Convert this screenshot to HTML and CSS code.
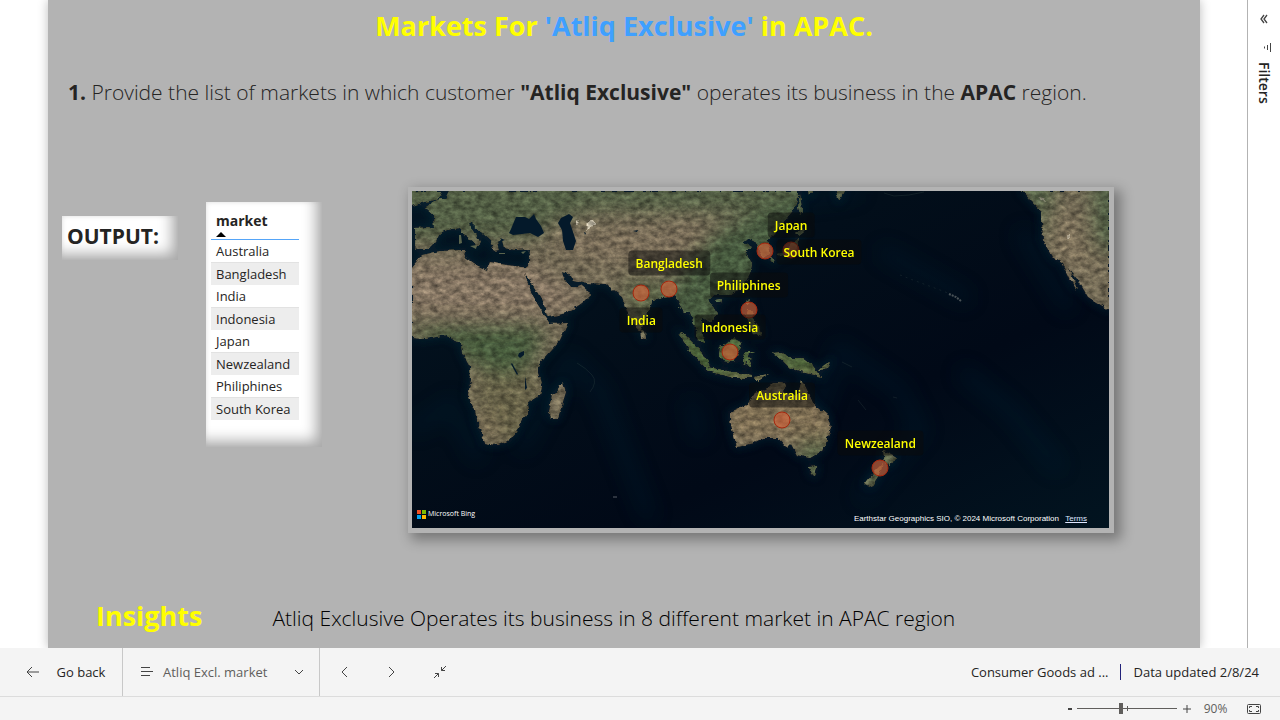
FILE: index.html
```html
<!DOCTYPE html>
<html lang="en">
<head>
<meta charset="utf-8">
<meta name="viewport" content="width=device-width, initial-scale=1">
<title>Atliq Excl. market</title>
<link rel="stylesheet" href="styles.css">
</head>
<body>
<div class="workspace">
  <main class="stage">
    <article class="report">
      <h1 class="title">Markets For <span class="accent">'Atliq Exclusive'</span> in APAC.</h1>
      <p class="question"><b>1.</b> Provide the list of markets in which customer <b>"Atliq Exclusive"</b> operates its business in the <b>APAC</b> region.</p>
      <section class="visuals">
        <h2 class="output card">OUTPUT:</h2>
        <div class="table-card card">
          <table class="markets">
            <thead><tr><th scope="col" aria-sort="ascending">market<svg class="sort" viewBox="0 0 10 5" aria-hidden="true"><path d="M0 5 5 0l5 5z"/></svg></th></tr></thead>
            <tbody>
              <tr><td>Australia</td></tr>
              <tr><td>Bangladesh</td></tr>
              <tr><td>India</td></tr>
              <tr><td>Indonesia</td></tr>
              <tr><td>Japan</td></tr>
              <tr><td>Newzealand</td></tr>
              <tr><td>Philiphines</td></tr>
              <tr><td>South Korea</td></tr>
            </tbody>
          </table>
        </div>
        <figure class="map-frame">
          <div class="map">
            <svg class="imagery" viewBox="412 191 697 337" preserveAspectRatio="none" role="img" aria-label="Satellite map of Asia Pacific">
              <defs>
                <filter id="terrain" x="412" y="191" width="697" height="337" filterUnits="userSpaceOnUse" color-interpolation-filters="sRGB">
                  <feTurbulence type="fractalNoise" baseFrequency=".13 .19" numOctaves="5" seed="8" result="n"/>
                  <feColorMatrix in="n" values="1 .4 0 0 -.22  1 .4 0 0 -.22  1 .4 0 0 -.22  0 0 0 0 1" result="g"/>
                  <feDisplacementMap in="SourceGraphic" in2="n" scale="5" xChannelSelector="R" yChannelSelector="G" result="d"/>
                  <feComposite in="d" in2="g" operator="arithmetic" k1=".85" k2=".52"/>
                </filter>
                <filter id="soft" x="-50%" y="-50%" width="200%" height="200%"><feGaussianBlur stdDeviation="10"/></filter>
                <filter id="shelf" x="-20%" y="-20%" width="140%" height="140%"><feGaussianBlur stdDeviation="4"/></filter>
                <linearGradient id="ocean" x1="0" x2="1" y1="0" y2="1">
                  <stop offset="0" stop-color="#031522"/><stop offset=".35" stop-color="#020e1a"/><stop offset=".65" stop-color="#010917"/><stop offset="1" stop-color="#021420"/>
                </linearGradient>
                <path id="continents" d="M412 191H798L798 197 793 210 783 223 773 235 767 240 770 253 763 258 757 243 748 238 742 243 752 247 745 253 752 263 750 273 743 287 730 295 713 295 708 300 715 310 717 315 710 322 702 317 702 330 704 343 698 340 695 327 690 313 685 313 680 305 675 295 663 297 653 300 648 312 644 322 640 331 633 325 627 310 622 297 613 290 607 284 587 283 573 280 567 272 562 271 563 277 570 287 577 287 582 285 588 290 590 295 582 303 567 313 548 317 542 300 533 285 528 277 525 275 533 297 543 313 550 324 568 323 560 340 542 360 538 366 538 373 542 387 540 395 527 403 528 413 522 418 520 425 510 440 497 445 485 443 478 425 475 410 468 395 471 380 470 367 462 353 461 342 455 341 447 335 425 339 412 338V267L422 255 440 251 462 250 465 250 464 256 478 266 487 270 490 262 500 264 520 267 526 267 529 262 530 249 514 250 504 248 502 240 497 242 499 250 494 251 490 240 480 231 470 222 469 225 477 237 480 243 475 248 474 242 465 235 459 228 446 230 440 233 436 241 428 249 417 249 415 247 415 228 434 227 433 214 425 207 436 200 445 199 449 191H442L438 199 424 202 412 206z
                  M563 383 566 392 558 418 552 418 548 412 552 395z M641 329l4 3 1 6-4 1z M678 332l7 3 10 10 8 8 7 13-5 1-15-15z M706 367l12 2 14 3 20 3 0 3-17 0-17-4-12-4z M754 377l15-3-11 7z M720 347l4-1 9-8 9 5-3 8-5 11-10-1-5-6z M744 352l11 0-8 3 5 3-3 1 3 7-3 0-3-5-1 4-2-1z M748 299l2-1-1 7-2 0z M716 300l6-1-1 4-4 0z M748 309l5 3-1 5 7 10 2 8-3 2-6-5-2-9-4-7z M773 353l8-1 6 6 16 0 9 7 10 12-8-2-8-2-8-2-8-3-8-8z M823 367l7-5-3 7-7 1z M772 256l3 3-2 4-3-3z M777 253l10-3 6-8 5-4-1 9-8 7-9 3z M796 233l5-4 4 3-5 4z M800 194l2 18-2 3-2-9z M808 191h5l-4 4z M836 191h8l-5 9z
                  M730 412 748 405 755 393 766 389 773 382 787 383 783 392 797 397 802 380 807 390 813 403 827 415 831 428 823 450 810 458 797 455 791 444 787 448 778 438 763 438 753 443 737 447 734 437 730 420z M809 467l8-1-2 10-4-2z M883 451l12 6-5 8-5-3z M883 463l-4 12-8 12-6-3 9-12z
                  M1022 191 1033 203 1042 212 1043 240 1052 257 1062 263 1070 280 1077 290 1073 277 1067 267 1078 280 1088 297 1109 310V191z"/>
                <clipPath id="land"><use href="#continents"/></clipPath>
              </defs>
              <rect x="412" y="191" width="697" height="337" fill="url(#ocean)"/>
              <g filter="url(#soft)" fill="none" stroke="#06283a" stroke-width="14" opacity=".28">
                <path d="M412 430 450 405 480 460 M520 450 570 360 600 390 650 520 M690 400 700 440 M810 430 840 350 900 390 920 430 860 500 M960 370 1010 410 1060 470 M780 200 860 190 M880 250 970 300 M1020 230 1070 310"/>
              </g>
              <use href="#continents" fill="#082c38" stroke="#082c3a" stroke-width="4" opacity=".55" filter="url(#shelf)"/>
              <g filter="url(#terrain)">
                <g clip-path="url(#land)">
                  <rect x="400" y="180" width="720" height="360" fill="#79705a"/>
                  <g filter="url(#soft)">
                    <path fill="#586549" d="M380 160H850V215L680 212 590 210 550 224 530 240 380 242z"/>
                    <path fill="#8c7c67" d="M400 262H530L590 300 560 315 530 315H400z"/>
                    <path fill="#4c6040" d="M400 326H545L530 370 500 376 470 362z"/>
                    <path fill="#6e694e" d="M470 375H540V440H485z"/>
                    <path fill="#7f7156" d="M475 415h20v25h-15z"/>
                    <path fill="#82745f" d="M560 232 700 222 720 240 690 255 620 265 560 255z"/>
                    <path fill="#4c5e42" d="M710 235 810 190V260L760 320H680V270z M655 285h60v70h-30z"/>
                    <path fill="#62694b" d="M620 280h40v50h-25z"/>
                    <path fill="#4d663b" d="M670 325h95v60H690z M770 345h60v40h-50z"/>
                    <path fill="#857559" d="M725 380H835V440H725z"/>
                    <path fill="#596748" d="M800 440h35v45h-40z M860 450h40v40h-40z"/>
                    <path fill="#566548" d="M1010 170H1055V250l-15-10z M1090 170h40v80h-35z"/>
                    <path fill="#857861" d="M1050 205 1080 220 1100 275 1070 265 1047 245z"/>
                  </g>
                  <g fill="#d4cbb5"><path d="M588 220h6l2 5-5 2-4 4z"/><path d="M576 220l3 3-3 1z"/><path opacity=".6" d="M1067 235h3v5h-3z M1037 197l6 1 3 4-5-2z"/></g>
                </g>
              </g>
              <g fill="#04192a">
                <path d="M511 229 516 217 525 217 529 219 534 214 536 219 541 226 544 233 538 237 530 233 522 234 513 235 509 233z M561 218 569 214 573 217 570 223 573 232 576 241 573 250 566 250 563 241 562 230 558 223z M519 353l5-2v4l-4 3-2-2z M512 363l6 11-1 1-6-11z M525 376l2 12-2 2z"/>
                <path d="M500 238l5 2-3 1z M584 232l2 1-1 2z M633 231l5-1-1 2z"/>
              </g>
              <g fill="#5a644d"><path d="M459 235h2l1 8-3 1z M470 246l7-1-1 4z M499 253h6v1h-6z M521 252l5-1-3 3z"/></g>
              <g fill="none" stroke="#617869" opacity=".35"><path d="M900 275l13 5 27 10 8 3" stroke-dasharray="2 4" opacity=".5"/><path d="M949 294l7 3 5 4" stroke="#d0d0c4" stroke-dasharray="2 1" stroke-width="2"/><path d="M884 193l10 3 15-1 15-3M842 362l10 5M858 400l8 10M893 397l4 1M577 363q9 5 15 12t-2 17" opacity=".5"/><path d="M613 497h4" stroke="#fff"/></g>
              <g class="pins">
                <circle cx="641" cy="293" r="8"/><circle cx="669" cy="289" r="8"/><circle cx="765" cy="251" r="8"/><circle cx="791" cy="250" r="8"/><circle cx="749" cy="310" r="8"/><circle cx="730" cy="352" r="8"/><circle cx="782" cy="420" r="8"/><circle cx="880" cy="468" r="8"/>
              </g>
            </svg>
            <span class="label japan">Japan</span>
            <span class="label korea">South Korea</span>
            <span class="label bangladesh">Bangladesh</span>
            <span class="label philippines">Philiphines</span>
            <span class="label india">India</span>
            <span class="label indonesia">Indonesia</span>
            <span class="label australia">Australia</span>
            <span class="label zealand">Newzealand</span>
            <figcaption class="credits">
              <span class="bing"><svg viewBox="0 0 9 9" aria-hidden="true"><path fill="#f25022" d="M0 0h4v4H0z"/><path fill="#7fba00" d="M5 0h4v4H5z"/><path fill="#00a4ef" d="M0 5h4v4H0z"/><path fill="#ffb900" d="M5 5h4v4H5z"/></svg>Microsoft Bing</span>
              <span class="copyright">Earthstar Geographics SIO, © 2024 Microsoft Corporation <a href="#terms">Terms</a></span>
            </figcaption>
          </div>
        </figure>
      </section>
      <section class="insights">
        <h2>Insights</h2>
        <p>Atliq Exclusive Operates its business in 8 different market in APAC region</p>
      </section>
    </article>
  </main>
  <aside class="filters">
    <button type="button" aria-label="Expand filters"><svg width="8" height="10" viewBox="0 0 8 10"><path d="M4 1 1 5l3 4M7 1 4 5l3 4" stroke-width="1.300"/></svg></button>
    <svg class="funnel" width="10" height="10" viewBox="0 0 10 10" aria-hidden="true"><path d="M8.500 0v9M5.500 2v5M2.500 3.500v2"/></svg>
    <span class="filters-name">Filters</span>
  </aside>
</div>
<footer>
  <nav class="actions" aria-label="Report navigation">
    <button type="button" class="back"><svg width="14" height="14" viewBox="0 0 14 14"><path d="M13 7H1M6 2 1 7l5 5"/></svg>Go back</button>
    <button type="button" class="pages"><svg width="14" height="12" viewBox="0 0 14 12"><path d="M1 1.500h9M1 5.500h12M1 9.500h9"/></svg><span>Atliq Excl. market</span><svg width="10" height="6" viewBox="0 0 10 6"><path d="M1 1l4 4 4-4"/></svg></button>
    <button type="button" class="step" aria-label="Previous page"><svg width="8" height="12" viewBox="0 0 8 12"><path d="M7 1 2 6l5 5"/></svg></button>
    <button type="button" class="step" aria-label="Next page"><svg width="8" height="12" viewBox="0 0 8 12"><path d="M1 1l5 5-5 5"/></svg></button>
    <button type="button" class="step" aria-label="Exit full screen"><svg width="14" height="14" viewBox="0 0 14 14"><path d="M13 1 8.500 5.500M8.500 2v3.500H12M1 13l4.500-4.500M2 8.500h3.500V12"/></svg></button>
    <div class="meta"><span>Consumer Goods ad ...</span><i></i><span>Data updated 2/8/24</span></div>
  </nav>
  <div class="zoombar">
    <button type="button" class="minus" aria-label="Zoom out"><svg width="6" height="10" viewBox="0 0 6 10"><path d="M1 5h4" stroke-width="2"/></svg></button>
    <input type="range" min="0" max="100" value="44" aria-label="Zoom">
    <button type="button" class="plus" aria-label="Zoom in"><svg width="8" height="8" viewBox="0 0 8 8"><path d="M0 4h8M4 0v8"/></svg></button>
    <output>90%</output>
    <button type="button" class="fit" aria-label="Fit to page"><svg width="14" height="10" viewBox="0 0 14 10"><rect x=".5" y=".5" width="13" height="9" rx="1"/><path d="M5 2.500H2.500V4M9 2.500h2.500V4M5 7.500H2.500V6M9 7.500h2.500V6"/></svg></button>
  </div>
</footer>
</body>
</html>
```
FILE: styles.css
```css
* { box-sizing: border-box; }
body {
  margin: 0;
  min-height: 100vh;
  display: flex;
  flex-direction: column;
  background: #fff;
  color: #252423;
  font-family: "Open Sans", "Noto Sans", sans-serif;
}
h1, h2, p, figure { margin: 0; }
button {
  border: 0;
  padding: 0;
  background: none;
  color: inherit;
  font: inherit;
  display: flex;
  align-items: center;
  justify-content: center;
}
button svg, .funnel { fill: none; stroke: #444; stroke-width: 1; }

.workspace { flex: 1; display: flex; }
.stage { flex: 1; min-width: 0; display: flex; padding: 0 47px 0 48px; overflow: hidden; }
.report {
  flex: 1;
  min-width: 0;
  display: flex;
  flex-direction: column;
  background: #b3b3b3;
  box-shadow: 0 0 10px #0004;
}
.title {
  padding-top: 6px;
  text-align: center;
  color: #ff0;
  font-size: 27px;
  line-height: 40px;
  font-weight: 700;
}
.accent { color: #3fa0ff; }
.question {
  padding: 30px 20px 0;
  font-size: 21px;
  line-height: 32px;
  font-weight: 300;
  white-space: nowrap;
}
.question b { font-weight: 700; }
.visuals {
  display: grid;
  grid-template-columns: 116px 116px 1fr;
  gap: 0 28px;
  align-items: start;
  padding: 79px 86px 0 14px;
}
.card { background: #fff; box-shadow: inset -10px -10px 14px -4px #aaa, inset 0 0 5px #ddd; }
.output {
  margin-top: 29px;
  padding: 0 5px;
  font-size: 21px;
  line-height: 40px;
  height: 44px;
}
.table-card { margin-top: 15px; padding: 5px 23px 27px 5px; }
.markets { width: 100%; border-collapse: separate; border-spacing: 0; font-size: 13px; line-height: 20px; }
.markets th {
  height: 33px;
  padding: 3px 5px 2px;
  border-bottom: 1px solid #55a5f8;
  text-align: left;
  font-size: 14px;
  line-height: 20px;
}
.sort { display: block; width: 10px; height: 5px; margin-top: 1px; }
.markets td { height: 22px; padding: 1px 5px; white-space: nowrap; }
.markets tr:nth-child(even) td { height: 23px; background: #ededed; border-top: 1px solid #e2e2e2; }

.map-frame {
  margin-left: 58px;
  padding: 4px 5px 5px 4px;
  background: #b3b3b3;
  box-shadow: 5px 5px 12px 2px #0005;
}
.map { position: relative; overflow: hidden; }
.imagery { display: block; width: 100%; height: auto; }
.pins { fill: #d4643a; fill-opacity: .65; stroke: #a5280f; stroke-width: 1; }
.label {
  position: absolute;
  transform: translate(-50%, -50%);
  padding: 0 7px;
  border-radius: 4px;
  background: rgba(10, 10, 10, .5);
  color: #ff0;
  font-size: 12px;
  line-height: 25px;
  font-weight: 600;
  white-space: nowrap;
}
.japan { left: 54.400%; top: 10%; }
.korea { left: 58.400%; top: 18%; }
.bangladesh { left: 36.900%; top: 21.500%; }
.philippines { left: 48.300%; top: 28%; }
.india { left: 32.900%; top: 38.200%; }
.indonesia { left: 45.600%; top: 40.500%; }
.australia { left: 53.100%; top: 60.500%; }
.zealand { left: 67.200%; top: 74.800%; }
.credits {
  position: absolute;
  inset: auto 22px 3px 5px;
  display: flex;
  justify-content: space-between;
  color: #fff;
}
.bing { display: flex; align-items: center; gap: 2px; margin-bottom: 6px; font-size: 7px; line-height: 10px; font-weight: 500; }
.bing svg { width: 9px; height: 9px; }
.copyright { font: 8px/12px "Liberation Sans", Arial, sans-serif; align-self: end; }
.copyright a { margin-left: 4px; color: #dfe6ff; }

.insights { display: flex; align-items: center; gap: 70px; margin-top: 63px; padding: 0 48px 12px; }
.insights h2 { color: #ff0; font-size: 27px; line-height: 40px; }
.insights p { padding-top: 3px; color: #000; font-size: 21px; line-height: 32px; font-weight: 300; white-space: nowrap; }

.filters {
  width: 33px;
  border-left: 1px solid #b3b3b3;
  display: flex;
  flex-direction: column;
  align-items: center;
  padding-top: 14px;
}
.funnel { margin: 19px 0 0 6px; }
.filters-name { margin-top: 9px; writing-mode: vertical-rl; font-size: 14px; line-height: 20px; font-weight: 600; }

footer { background: #f4f4f4; }
.actions { height: 49px; display: flex; border-bottom: 1px solid #dcdcdc; font-size: 13px; }
.back { width: 123px; gap: 17px; padding-left: 9px; border-right: 1px solid #c8c8c8; }
.pages { width: 197px; gap: 9px; padding: 0 15px 0 17px; border-right: 1px solid #c8c8c8; color: #605e5c; }
.pages span { flex: 1; text-align: left; }
.step { width: 48px; }
.meta { flex: 1; display: flex; align-items: center; justify-content: flex-end; gap: 12px; padding-right: 21px; }
.meta i { width: 1px; height: 16px; background: #22227a; }
.zoombar { height: 23px; display: flex; align-items: center; justify-content: flex-end; padding-right: 19px; color: #605e5c; font-size: 12px; }
.zoombar input { appearance: none; width: 100px; height: 16px; margin: 0 6px 0 4px; background: linear-gradient(#605e5c, #605e5c) 50px 50% / 1px 5px no-repeat, linear-gradient(#605e5c, #605e5c) 0 50% / 100% 1px no-repeat; }
.zoombar input::-webkit-slider-thumb { appearance: none; width: 4px; height: 11px; background: #605e5c; }
.zoombar output { width: 29px; margin: 0 17px 0 10px; text-align: center; }
```
